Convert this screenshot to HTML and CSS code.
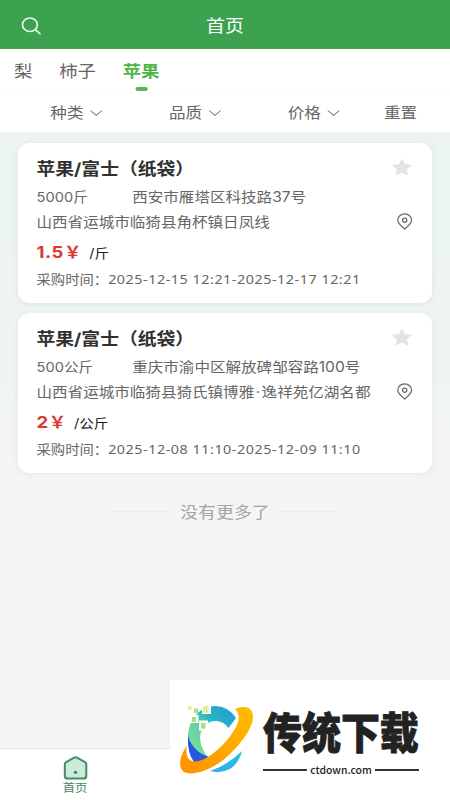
FILE: index.html
```html
<!DOCTYPE html>
<html lang="zh-CN">
<head>
<meta charset="utf-8">
<title>首页</title>
<link rel="stylesheet" href="styles.css">
</head>
<body>
<div class="screen">
  <header class="header">
    <svg class="search" viewBox="0 0 20 20"><circle cx="8.6" cy="8.6" r="7.4"/><path d="M14 14l4.6 4.6"/></svg>
    <h1>首页</h1>
  </header>
  <nav class="tabs">
    <span>梨</span><span>柿子</span><span class="active">苹果</span>
  </nav>
  <div class="filters">
    <span>种类<svg viewBox="0 0 12 8"><path d="M.8 1.5L6 6.3l5.2-4.8"/></svg></span>
    <span>品质<svg viewBox="0 0 12 8"><path d="M.8 1.5L6 6.3l5.2-4.8"/></svg></span>
    <span>价格<svg viewBox="0 0 12 8"><path d="M.8 1.5L6 6.3l5.2-4.8"/></svg></span>
    <span>重置</span>
  </div>
  <main class="list">
    <article class="card">
      <div class="row title"><h2>苹果/富士（纸袋）</h2><svg class="star" viewBox="0 0 20 20"><path d="M10 1.500l2.600 5.400 6 .8-4.400 4.100 1.100 5.900-5.300-2.900-5.300 2.900 1.100-5.900L1.400 7.700l6-.8z"/></svg></div>
      <div class="row info"><span class="amount">5000斤</span><span>西安市雁塔区科技路37号</span></div>
      <div class="row place"><span>山西省运城市临猗县角杯镇日凤线</span><svg class="pin" viewBox="0 0 16 16" preserveAspectRatio="none"><path d="M8 15C5.500 13 1.400 10 1.400 6.800a6.600 5.900 0 0 1 13.200 0C14.600 10 10.500 13 8 15z"/><circle cx="8" cy="6.900" r="2"/></svg></div>
      <div class="row price"><b>1.5<i>￥</i></b><span>/斤</span></div>
      <div class="row time"><span class="label">采购时间：</span><span>2025-12-15 12:21-2025-12-17 12:21</span></div>
    </article>
    <article class="card">
      <div class="row title"><h2>苹果/富士（纸袋）</h2><svg class="star" viewBox="0 0 20 20"><path d="M10 1.500l2.600 5.400 6 .8-4.400 4.100 1.100 5.900-5.300-2.900-5.300 2.900 1.100-5.900L1.400 7.700l6-.8z"/></svg></div>
      <div class="row info"><span class="amount">500公斤</span><span>重庆市渝中区解放碑邹容路100号</span></div>
      <div class="row place"><span>山西省运城市临猗县猗氏镇博雅<i class="dot">·</i>逸祥苑亿湖名都</span><svg class="pin" viewBox="0 0 16 16" preserveAspectRatio="none"><path d="M8 15C5.500 13 1.400 10 1.400 6.800a6.600 5.900 0 0 1 13.200 0C14.600 10 10.500 13 8 15z"/><circle cx="8" cy="6.900" r="2"/></svg></div>
      <div class="row price"><b>2<i>￥</i></b><span>/公斤</span></div>
      <div class="row time"><span class="label">采购时间：</span><span>2025-12-08 11:10-2025-12-09 11:10</span></div>
    </article>
    <p class="end">没有更多了</p>
  </main>
  <footer class="tabbar">
    <a class="home"><svg viewBox="0 0 24 22" preserveAspectRatio="none"><path d="M2 7.500Q2 6.300 3.200 5.600L10.700 1.500Q12 .9 13.300 1.500L20.800 5.600Q22 6.300 22 7.500V18Q22 20.600 19.400 20.600H4.600Q2 20.600 2 18z"/><circle cx="12" cy="15" r="1.500"/></svg>首页</a>
  </footer>
</div>
<aside class="brand">
  <svg class="logo" viewBox="0 0 100 100">
    <defs>
      <linearGradient id="ring" x1="0" y1="1" x2="1" y2="0"><stop offset="0" stop-color="#8be88e"/><stop offset=".42" stop-color="#62cfa5"/><stop offset=".62" stop-color="#26b5c8"/><stop offset="1" stop-color="#2398d8"/></linearGradient>
      <linearGradient id="orbit" x1="0" y1="1" x2="1" y2="0"><stop offset="0" stop-color="#ff8f00"/><stop offset="1" stop-color="#ffbe00"/></linearGradient>
      <linearGradient id="tail" x1="0" y1="0" x2="1" y2="0"><stop offset="0" stop-color="#38a8fa"/><stop offset="1" stop-color="#25c2d8"/></linearGradient>
    </defs>
    <path fill="url(#ring)" d="M18 50C17 30 30 16 45 16Q58 16 66 28L58.500 38C53 30 43 29 36 34C28 41 28 55 38 67L30 70Q19 63 18 50z"/>
    <path fill="#2459e0" d="M18 46Q23 62 39 67L36 71Q30 73 24 72Q17 63 18 46z"/>
    <path fill="url(#tail)" d="M40 81Q58 75 72 61Q69 73 60 79Q50 84 40 81z"/>
    <path fill="url(#orbit)" d="M65 19C75 15 83 17 83 27C83 39 68 58 52 71C38 81 22 86 14 82C8 78 9 67 17 55.500C15 66 18 71 24 71.500C34 72 48 61 58 49C69 35 72 26 65 19z"/>
    <path fill="#fff" d="M32 15h9v9h-9zM20.500 25h8v8h-8zM29 30.500h9v10h-9z"/>
    <path fill="#dff09a" d="M33 16h5.500v7H33zM18 16h3.500v4H18z"/>
    <path fill="#a5df7e" d="M24 18.500h4v4.500h-4zM22 27h4v5h-4zM31 33h4.500v5.500H31z"/>
  </svg>
  <div class="wordmark">
    <strong>传统下载</strong>
    <div class="domain">ctdown.com</div>
  </div>
</aside>
</body>
</html>
```

FILE: styles.css
```css
* { box-sizing: border-box; margin: 0; padding: 0; }
body { width: 450px; height: 800px; overflow: hidden; position: relative; font-family: Inter, "Noto Sans CJK SC", sans-serif; color: #666; }
svg { display: block; flex: none; }
i { font-style: normal; }

/* The layout is 402 units wide and stretched to fill the viewport. */
.screen { width: 402px; height: 800px; transform: scaleX(1.1194); transform-origin: 0 0; display: flex; flex-direction: column; background: linear-gradient(#ebf4f0 132px, #edf4f1 300px, #f4f5f5 500px, #f4f4f4 750px); }

.header { height: 49px; background: #3da250; color: #fff; display: grid; grid-template-columns: 60px 1fr 60px; align-items: center; padding-top: 3px; }
.search { width: 18px; height: 18px; margin-left: 18.5px; fill: none; stroke: #e9f8eb; stroke-width: 1.7; stroke-linecap: round; }
.header h1 { font-size: 17px; font-weight: 400; line-height: 24px; text-align: center; }

.tabs { height: 45px; background: #fff; display: flex; padding: 9px 0 0 12.5px; gap: 24px; font-size: 16.4px; line-height: 26px; border-bottom: 1px solid #fafafa; }
.active { color: #4fb548; font-weight: 700; display: flex; flex-direction: column; align-items: center; gap: 3px; }
.active::after { content: ""; width: 11px; height: 4px; border-radius: 2px; background: #5bb453; }

.filters { height: 38px; background: #fff; display: grid; grid-template-columns: 106px 106px 86px 50px; padding-left: 45px; font-size: 14.8px; line-height: 37px; }
.filters span { display: flex; align-items: center; gap: 5px; }
.filters svg { width: 12px; height: 8px; fill: none; stroke: #777; stroke-width: 1; }

.list { flex: 1; padding: 10.5px 16px 0; display: flex; flex-direction: column; gap: 10px; }
.card { height: 160px; background: #fff; border-radius: 11px; padding: 11px 17px 0 16.6px; box-shadow: 0 1px 5px rgba(60, 90, 75, .07); }
.row { display: flex; align-items: center; white-space: nowrap; height: 26px; font-size: 13.9px; }
.title { height: 28px; justify-content: space-between; }
.title h2 { font-size: 16.8px; font-weight: 700; color: #303030; }
.star { width: 20px; height: 19px; fill: #e4e4e4; stroke: #e4e4e4; stroke-linejoin: round; }
.info { height: 28px; }
.amount { width: 85.5px; font-size: 13.1px; padding-top: 1px; }
.place { height: 24px; justify-content: space-between; }
.place span { padding-bottom: 2px; }
.pin { width: 15px; height: 17px; fill: none; stroke: #666; stroke-width: 1.2; }
.dot { padding: 0 1.3px; }
.price { height: 35px; gap: 6.5px; }
.price b { font-size: 16.5px; color: #d93b31; letter-spacing: .5px; }
.price i { font-size: 15.5px; }
.price span { color: #222; font-size: 13px; padding-top: 2px; }
.time { height: 21px; font-family: "Noto Sans", "Noto Sans CJK SC", sans-serif; font-size: 12.8px; align-items: baseline; letter-spacing: .48px; }
.time .label { width: 64px; letter-spacing: 0; }
.end { display: flex; align-items: center; justify-content: center; gap: 9px; height: 24px; margin-top: 16.5px; font-size: 16px; color: #a2a6a4; }
.end::before, .end::after { content: ""; width: 53px; height: 1px; background: #ebeeec; }

.tabbar { height: 52px; background: #fff; border-top: 1px solid #e0e0e0; display: flex; padding-left: 49px; }
.home { width: 36px; display: flex; flex-direction: column; align-items: center; font-size: 11px; line-height: 17px; color: #4c8065; padding-top: 7px; }
.home svg { width: 23px; height: 24px; fill: #cbecd9; stroke: #4b8a68; stroke-width: 1.9; }
.home circle { fill: #3d8059; stroke: none; }

.brand { position: absolute; left: 170px; top: 680px; width: 280px; height: 120px; background: #fff; display: flex; padding-top: 10px; }
.logo { width: 100px; height: 100px; margin-right: -7px; }
.wordmark { width: 156px; padding-top: 15px; }
.wordmark strong { display: block; width: 172px; font: 900 43px/50px "Noto Sans CJK SC", sans-serif; color: #222; -webkit-text-stroke: .8px #222; transform: scaleX(.906); transform-origin: 0 0; }
.domain { display: flex; align-items: center; gap: 3px; font: 500 10.4px/14px "Noto Sans CJK SC", sans-serif; color: #222; margin-top: 8px; }
.domain::before, .domain::after { content: ""; flex: 1; height: 2px; background: #333; }
```
